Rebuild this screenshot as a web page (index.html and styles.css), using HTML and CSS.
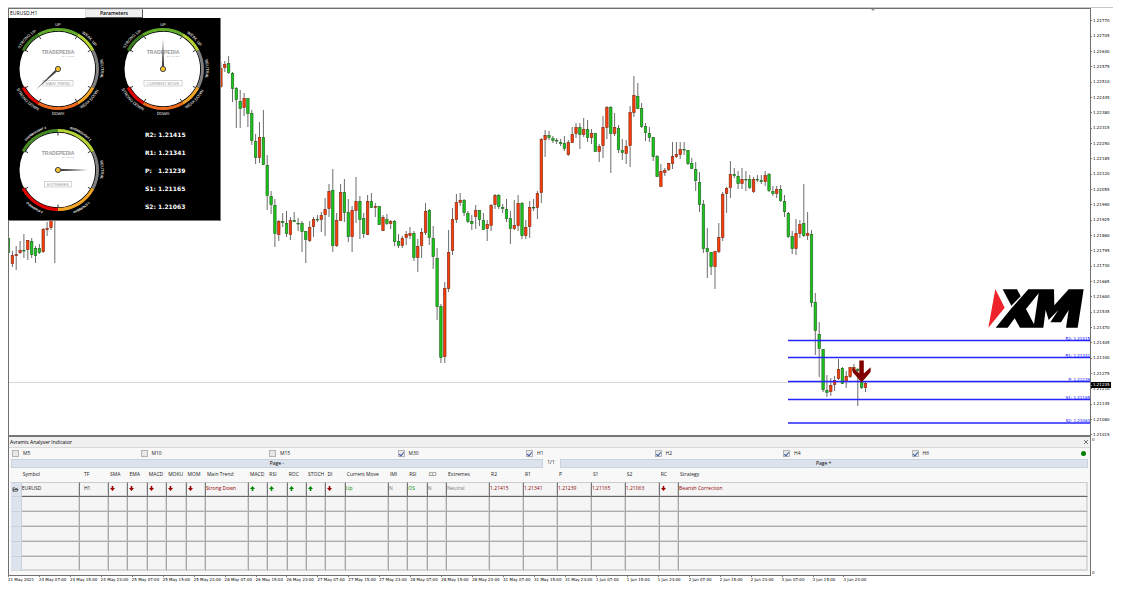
FILE: index.html
```html
<!DOCTYPE html>
<html lang="en">
<head>
<meta charset="utf-8">
<title>EURUSD,H1</title>
<link rel="stylesheet" href="styles.css">
</head>
<body>
<main class="terminal">
  <section class="chart">
    <svg class="plot" viewBox="9 9 1081 426" role="img" aria-label="EURUSD hourly candles">
      <path d="M871 9h4l-2 2z" fill="#999"/>
      <path d="M9 382.500H1090" stroke="#d8d8d8"/>
      <g id="candles"></g>
      <g class="pivots" id="pivots"></g>
      <path d="M859.300 360.500h4.500v13l6.800-6.300v4.800l-9 10.500-9-10.500v-4.800l6.700 6.300z" fill="#800000"/>
      <g transform="translate(780 270) scale(.33333)">
        <path d="M646 57L674 113 625 173z" fill="#ee2229"/>
        <path d="M668 58H711L722 79 694 107z"/>
        <path d="M647 173L695 114 745 58H822L823 106 866 58H911L893 173H858L866 120 843 157H811L835 120 806 150 797 120 790 173H720L704 145 683 173zM776 70L738 117 762 163z" fill-rule="evenodd"/>
      </g>
    </svg>
    <div class="overlay">
      <div class="overlay-head">
        <span class="pair">EURUSD,H1</span>
        <button class="params" type="button">Parameters</button>
      </div>
      <div class="dash">
        <div id="gauge-main"></div>
        <div id="gauge-move"></div>
        <div id="gauge-extremes"></div>
        <ul class="levels">
          <li>R2: 1.21415</li>
          <li>R1: 1.21341</li>
          <li>P: &nbsp; 1.21239</li>
          <li>S1: 1.21165</li>
          <li>S2: 1.21063</li>
        </ul>
      </div>
    </div>
  </section>
  <aside class="price-axis" id="prices"><span class="now">1.21235</span></aside>

  <section class="panel">
    <header class="panel-title"><h1>Avramis Analyser Indicator</h1><button class="close" type="button" aria-label="Close"><svg viewBox="0 0 6 6"><path d="M1 1l4 4M5 1L1 5"/></svg></button></header>
    <div class="panel-body">
      <div class="frames">
        <label><input type="checkbox">M5</label>
        <label><input type="checkbox">M10</label>
        <label><input type="checkbox">M15</label>
        <label><input type="checkbox" checked>M30</label>
        <label><input type="checkbox" checked>H1</label>
        <label><input type="checkbox" checked>H2</label>
        <label><input type="checkbox" checked>H4</label>
        <label><input type="checkbox" checked>H6</label>
        <i class="status"></i>
      </div>
      <div class="pager">
        <button type="button">Page -</button>
        <span>1/1</span>
        <button type="button">Page +</button>
      </div>
      <table class="signals">
        <colgroup>
          <col class="c-head"><col class="c-symbol"><col class="c-tf">
          <col class="c-s"><col class="c-s"><col class="c-s"><col class="c-s"><col class="c-s">
          <col class="c-trend">
          <col class="c-s"><col class="c-s"><col class="c-s"><col class="c-s"><col class="c-s">
          <col class="c-trend">
          <col class="c-s"><col class="c-s"><col class="c-s">
          <col class="c-trend">
          <col class="c-price"><col class="c-price"><col class="c-price"><col class="c-price"><col class="c-price">
          <col class="c-s"><col>
        </colgroup>
        <thead>
          <tr><td></td><th>Symbol</th><th class="tf">TF</th><th>SMA</th><th>EMA</th><th>MACD</th><th>MOKU</th><th>MOM</th><th>Main Trend</th><th>MACD</th><th>RSI</th><th>ROC</th><th>STOCH</th><th>DI</th><th>Current Move</th><th>IMI</th><th>RSI</th><th>CCI</th><th>Extremes</th><th>R2</th><th>R1</th><th>P</th><th>S1</th><th>S2</th><th>RC</th><th>Strategy</th></tr>
        </thead>
        <tbody id="rows">
          <tr class="filled">
            <td class="handle"><svg viewBox="0 0 8 6"><path d="M1 5V1h2l1 1h2v1M1 5l1-2h5L6 5z"/></svg></td>
            <td>EURUSD</td><td class="tf">H1</td>
            <td class="down"></td><td class="down"></td><td class="down"></td><td class="down"></td><td class="down"></td>
            <td class="bear">Strong Down</td>
            <td class="up"></td><td class="up"></td><td class="up"></td><td class="up"></td><td class="down"></td>
            <td class="bull">Up</td>
            <td class="flat">N</td><td class="bull">OS</td><td class="flat">N</td><td class="flat">Neutral</td>
            <td class="bear">1.21415</td><td class="bear">1.21341</td><td class="bear">1.21239</td><td class="bear">1.21165</td><td class="bear">1.21063</td>
            <td class="down"></td><td class="bear">Bearish Correction</td>
          </tr>
        </tbody>
      </table>
    </div>
  </section>
  <aside class="sub-axis"><span>0</span><span>0</span></aside>
  <footer class="time-axis" id="times"></footer>
</main>
<script src="chart.js"></script>
</body>
</html>
```
FILE: styles.css
```css
* { box-sizing: border-box; }
body {
  margin: 0;
  padding: 7px 8px;
  background: #fff;
  color: #222;
  font: 5px/7px "Open Sans", sans-serif;
}
button { font: inherit; color: inherit; padding: 0; border: 0; background: none; }
.terminal {
  display: grid;
  grid-template-columns: 1fr 22px;
  border-top: 1px solid #c8c8c8;
}

.chart {
  position: relative;
  border: 1px solid #707070;
  border-bottom: 2px solid #777;
}
.plot { display: block; width: 100%; }
.pivots line { stroke: #2424ff; stroke-width: 1.4; }
.pivots text {
  fill: #00f;
  font: 4px "DejaVu Sans", sans-serif;
  text-anchor: end;
}
.wick { stroke: #6c6c6c; stroke-width: 1; }
.candle-up { fill: #ff3c08; stroke: #843018; stroke-width: .7; }
.candle-down { fill: #18c818; stroke: #246c24; stroke-width: .7; }

.overlay { position: absolute; top: 0; left: -1px; }
.overlay-head { display: flex; height: 9px; align-items: center; }
.pair { width: 77px; padding-left: 2px; color: #000; }
.params {
  width: 58px;
  height: 9px;
  background: #f0f0f0;
  border: 1px solid #ddd;
  border-right-color: #555;
  border-bottom-color: #555;
  color: #000;
  font-weight: 600;
}
.dash {
  display: grid;
  grid-template-columns: 100px 100px;
  grid-auto-rows: 100px;
  gap: 1px 5px;
  padding: 1px 7px 0 0;
  background: #000;
  border-right: 1px solid #777;
  border-bottom: 1px solid #777;
}
.dash svg { display: block; width: 100%; height: 100%; }
.dial-label { fill: #fff; font: 4px "Liberation Sans", sans-serif; text-anchor: middle; }
.dial-label.long { font: bold 3px "Liberation Sans", sans-serif; }
.dial-brand { fill: #999; font: bold 5px "Liberation Sans", sans-serif; text-anchor: middle; }
.dial-by { fill: #999; font: 2px "Liberation Sans", sans-serif; text-anchor: end; }
.dial-name { fill: #999; font: 4px "Liberation Sans", sans-serif; text-anchor: middle; }
.levels {
  margin: 0;
  padding: 6px 0 0 32px;
  list-style: none;
  color: #fff;
  font: bold 6px/18px "DejaVu Sans", sans-serif;
  white-space: nowrap;
}

.price-axis {
  position: relative;
  display: flex;
  flex-direction: column;
  justify-content: space-between;
  margin-bottom: -1px;
  padding: 10px 0 0;
  color: #000;
  font: 4px/6px "DejaVu Sans", sans-serif;
}
.price-axis span::before {
  content: "";
  display: inline-block;
  width: 1px;
  height: 1px;
  margin-right: 1px;
  vertical-align: middle;
  background: #777;
}
.price-axis .now {
  position: absolute;
  top: 87%;
  left: 0;
  right: 2px;
  background: #000;
  color: #fff;
}

.panel {
  border: 1px solid #707070;
  border-top: 0;
  background: #f8f8f8;
}
.panel-title {
  display: flex;
  justify-content: space-between;
  align-items: center;
  height: 11px;
  padding: 0 1px;
  background: #f0f0f0;
  border-bottom: 1px solid #d8d8d8;
}
.panel-title h1 { margin: 0; font-size: 5px; font-weight: 400; color: #000; }
.close { width: 6px; height: 6px; }
.close svg { display: block; fill: none; stroke: #777; }
.panel-body { padding: 0 2px 4px; }

.frames {
  display: grid;
  grid-template-columns: repeat(8, 1fr) 48px;
  align-items: center;
  height: 11px;
  padding-left: 1px;
}
.frames label { display: flex; align-items: center; gap: 4px; }
.frames input {
  appearance: none;
  display: grid;
  place-content: center;
  width: 7px;
  height: 7px;
  margin: 0;
  border: 1px solid #b4b4b4;
  background: #e8e8e8;
}
.frames input:checked::after {
  content: "";
  width: 2px;
  height: 4px;
  border: solid #3c5ca8;
  border-width: 0 1px 1px 0;
  transform: rotate(40deg);
}
.status {
  justify-self: end;
  width: 5px;
  height: 5px;
  margin-right: 2px;
  border-radius: 50%;
  background: #008000;
}
.pager {
  display: grid;
  grid-template-columns: minmax(0, 531fr) 17px minmax(0, 528fr);
  height: 9px;
  text-align: center;
}
.pager span { line-height: 6px; }
.pager button { background: #dce3ec; border: 1px solid #c6d2de; line-height: 7px; color: #000; }

.signals {
  width: 100%;
  table-layout: fixed;
  border-spacing: 0;
}
.c-head { width: 1%; }
.c-symbol { width: 5.4%; }
.c-tf { width: 2.7%; }
.c-s { width: 1.8%; }
.c-trend { width: 4%; }
.c-price { width: 3.15%; }
.signals th, .signals td { padding: 0; text-align: left; font-weight: 400; white-space: nowrap; }
.signals th { height: 14px; padding: 0 0 1px 1px; }
.signals .tf { padding-left: 4px; }
.signals tbody td {
  height: 15px;
  background: #f5f5f5;
  border-right: 1px solid #a8a8a8;
  border-bottom: 1px solid #acacac;
  box-shadow: inset -1px -1px #d8d8d8;
}
.signals tbody tr:last-child td { height: 14px; border-bottom-color: #d8d8d8; }
.signals tbody .filled td {
  height: 15px;
  padding-bottom: 2px;
  border-top: 1px solid #ccc;
  border-right-color: #777;
  border-bottom-color: #666;
}
.signals tbody td:last-child { border-right-color: #ddd; }
.signals tbody .handle {
  background: #dce3ec;
  border-right-color: #c6d2de;
  border-bottom-color: #c6d2de;
  box-shadow: none;
}
.signals tbody .filled .handle { border-color: #c6d2de; padding: 0 0 0 1px; }
.handle svg { display: block; width: 7px; height: 5px; fill: none; stroke: #444; }
.arrow { display: block; width: 5px; height: 5px; margin-left: 1px; }
.signals tbody .filled .down, .signals tbody .filled .up { padding-bottom: 3px; }
.down .arrow { fill: #900; }
.up .arrow { fill: #080; transform: rotate(180deg); }
.signals .bear { color: #8c0000; }
.signals .bull { color: #008c00; }
.signals .flat { color: #777; }

.sub-axis {
  display: flex;
  flex-direction: column;
  justify-content: space-between;
  padding-left: 1px;
  font: 4px/6px "DejaVu Sans", sans-serif;
}
.time-axis {
  display: grid;
  grid-template-columns: repeat(35, minmax(0, 1fr));
  color: #000;
  font: 4px/6px "DejaVu Sans", sans-serif;
  white-space: nowrap;
}
.time-axis span::before {
  content: "";
  display: block;
  width: 1px;
  height: 1px;
  background: #777;
}
```
FILE: chart.js
```javascript
// Each candle: high, body top, body bottom, low, direction (r = up, g = down).
const data = `233 238 253 255 g|251 255 264 267 r|246 254 256 270 r|241 250 253 254 r|234 250 251 258 g|240 240 250 260 r|238 241 255 258 g|246 248 256 263 g|244 248 253 254 g|228 229 252 253 r|222 228 230 236 r|210 215 228 230 r|200 205 206 263 g`.split("|");
const later = `62 68 87 88 r|61 64 68 72 r|56 63 73 74 g|72 73 89 102 g|87 88 100 128 g|90 101 109 128 g|93 98 108 116 r|98 98 114 127 g|110 113 141 145 g|134 141 158 164 g|122 137 158 163 r|110 137 165 165 g|155 165 196 210 g|191 196 205 214 g|199 205 234 247 g|220 221 235 241 r|213 221 223 227 g|211 223 234 237 g|217 220 235 240 r|212 220 222 222 g|218 223 223 231 g|221 223 232 252 g|231 231 240 263 g|221 227 241 242 r|217 219 227 237 r|215 219 220 222 g|212 215 220 232 r|198 209 215 236 r|184 191 209 217 r|169 190 246 252 g|213 220 246 247 r|184 192 221 221 r|179 192 213 222 g|199 212 237 242 g|206 210 237 252 r|177 201 211 223 r|196 201 220 239 g|213 218 234 238 g|195 201 235 235 r|193 201 208 208 g|203 206 208 217 r|206 206 225 225 g|215 217 231 231 r|214 219 224 225 g|220 221 224 229 r|220 221 242 246 g|234 241 246 248 g|236 238 246 248 r|231 234 238 245 r|227 233 236 239 r|231 233 258 261 g|239 246 258 272 r|228 232 246 258 r|203 211 233 235 r|209 210 238 245 g|226 238 257 269 g|248 258 307 320 g|304 306 358 363 g|282 288 357 363 r|230 252 289 292 r|208 219 251 255 r|194 202 220 223 r|193 200 203 206 r|199 200 213 216 g|211 213 222 223 g|215 221 224 230 g|205 210 217 229 r|210 210 220 226 g|213 220 230 230 g|220 224 229 241 r|204 205 226 231 r|194 195 205 209 r|194 195 207 209 g|204 207 209 213 g|199 209 219 222 g|211 218 229 244 g|200 225 229 230 r|195 203 226 231 r|202 203 236 239 g|220 227 236 239 r|201 207 227 238 r|199 207 208 211 g|191 193 208 219 r|138 139 193 203 r|130 135 140 157 r|131 135 138 140 g|136 138 141 143 g|138 140 141 144 g|139 142 144 146 g|136 143 149 151 g|140 142 155 156 r|127 134 143 143 r|123 127 134 138 r|123 127 135 149 g|118 129 135 137 r|120 129 138 142 g|129 133 138 144 r|133 133 152 152 g|144 146 152 162 r|116 127 146 158 r|106 107 128 139 r|106 107 134 173 g|113 127 134 136 r|125 128 150 153 g|139 150 153 160 g|140 146 154 164 r|106 112 146 167 r|76 95 113 117 r|83 96 109 109 g|103 108 127 128 g|123 126 133 141 g|127 133 138 142 g|137 137 157 161 g|155 156 177 177 g|164 171 187 187 r|168 170 173 176 r|163 163 170 171 r|142 156 164 169 r|142 154 157 158 r|142 149 155 159 r|142 149 150 155 g|150 150 164 165 g|158 163 169 169 g|162 169 181 191 g|172 182 205 212 g|200 204 249 253 g|228 248 252 278 g|252 252 267 275 g|251 251 267 289 r|223 237 252 253 r|192 194 238 241 r|187 188 194 213 r|161 174 188 198 r|168 174 176 178 g|171 176 184 189 g|168 179 184 189 r|171 179 180 191 g|175 179 188 189 g|177 179 192 193 r|175 179 180 182 g|175 180 182 184 g|171 175 182 186 r|173 174 191 192 g|186 191 194 196 g|186 189 194 198 r|185 189 201 202 g|195 201 212 217 g|212 213 237 238 g|231 236 249 254 g|219 233 249 255 r|220 224 234 238 r|184 223 236 237 g|212 233 236 240 r|230 234 303 307 g|293 302 331 355 g|322 334 349 377 g|349 349 390 392 g|375 390 393 397 g|378 385 392 396 r|376 380 385 391 r|359 369 379 380 r|367 368 384 384 g|371 376 382 388 r|367 367 377 378 r|364 367 371 373 r|368 369 371 406 g|380 381 388 389 g|382 383 388 392 r`.split("|");

const STEP = 3.86;
const draw = (list, start) => list.map((row, i) => {
  const [hi, top, bottom, lo, dir] = row.split(" ");
  const x = start + i * STEP;
  const h = Math.max(0.5, bottom - top - 1);
  return `<path class="wick" d="M${x.toFixed(1)} ${hi}V${lo}"/>` +
    `<rect class="candle-${dir === "r" ? "up" : "down"}" x="${(x - 1.2).toFixed(1)}" y="${+top + 0.5}" width="2.4" height="${h}"/>`;
}).join("");
document.getElementById("candles").innerHTML = draw(data, 8.5) + draw(later, 220.9);

document.getElementById("pivots").innerHTML = [
  ["R2: 1.21415", 340.5], ["R1: 1.21341", 357.5], ["P: 1.21239", 381.5], ["S1: 1.21165", 399.5], ["S2: 1.21063", 423]
].map(([name, y]) => `<line x1="788" x2="1090" y1="${y}" y2="${y}"/><text x="1090" y="${y - 1}">${name}</text>`).join("");

let prices = "";
for (let p = 122770; p >= 121015; p -= 65) prices += `<span>${(p / 100000).toFixed(5)}</span>`;
document.getElementById("prices").insertAdjacentHTML("afterbegin", prices);

const days = ["24 May", "25 May", "26 May", "27 May", "28 May", "31 May", "1 Jun", "2 Jun", "3 Jun"];
document.getElementById("times").innerHTML = ["21 May 2021"]
  .concat(days.flatMap(d => ["07:00", "15:00", "23:00"].map(t => `${d} ${t}`)))
  .map(t => `<span>${t}</span>`).join("");

const arrow = '<svg class="arrow" viewBox="0 0 5 5"><path d="M1.700 0h1.600v2h1.700L2.500 5 0 2h1.700z"/></svg>';
document.querySelectorAll("td.up, td.down").forEach(td => { td.innerHTML = arrow; });
document.getElementById("rows").insertAdjacentHTML("beforeend",
  `<tr><td class="handle"></td>${"<td></td>".repeat(25)}</tr>`.repeat(5));

// Angles run clockwise from twelve o'clock.
const point = (a, r) => {
  const t = a * Math.PI / 180;
  return `${(r * Math.sin(t)).toFixed(2)} ${(-r * Math.cos(t)).toFixed(2)}`;
};
const arc = (a, b, r, color, width) =>
  `<path d="M${point(a, r)}A${r} ${r} 0 ${b - a > 180 ? 1 : 0} 1 ${point(b, r)}" fill="none" stroke="${color}" stroke-width="${width}"/>`;

function gauge(id, name, boxWidth, angle, bands, upper, lower, ticks) {
  const label = (path, t, offset) =>
    `<text class="dial-label${t.startsWith("OVER") ? " long" : ""}"><textPath href="#${id}-${path}" startOffset="${offset}%">${t}</textPath></text>`;
  let s = `<svg viewBox="-50 -50 100 100"><defs>
    <path id="${id}-cw" d="M-43 0A43 43 0 0 1 43 0A43 43 0 0 1 -43 0"/>
    <path id="${id}-ccw" d="M-46 0A46 46 0 0 0 46 0A46 46 0 0 0 -46 0"/></defs>
    <circle r="38.500" fill="#fff"/>`;
  s += arc(-62, 242, 37.8, "#000", 1.4);
  bands.forEach(([a, b, c]) => { s += arc(a, b, 39.5, c, 3); });
  ticks.forEach(a => { s += `<path d="M${point(a, 34.5)}L${point(a, 37.5)}" stroke="#333"/>`; });
  upper.forEach(([t, a]) => { s += label("cw", t, 25 + a / 3.6); });
  lower.forEach(([t, a]) => { s += label("ccw", t, 25 + (180 - a) / 3.6); });
  s += `<text class="dial-brand" y="-15">TRADEPEDIA</text><text class="dial-by" x="16" y="-12">BY AVRAMIS</text>
    <rect x="${-boxWidth / 2}" y="11.500" width="${boxWidth}" height="5.500" fill="#fff" stroke="#c4c4c4" stroke-width=".7"/>
    <text class="dial-name" y="15.700">${name}</text>
    <path d="M-1.200 0L0 -30L1.200 0z" fill="#444" transform="rotate(${angle})"/>
    <circle r="2.600" fill="#f4c430" stroke="#444" stroke-width="1"/></svg>`;
  document.getElementById(id).innerHTML = s;
}
const trend = [[-62, -30, "#3c7a22"], [-30, 30, "#62ac2c"], [30, 62, "#b2d235"], [62, 118, "#808080"],
  [118, 150, "#f2a426"], [150, 210, "#ee6a1c"], [210, 242, "#e00000"]];
const up = [["STRONG UP", -46], ["UP", 0], ["WEAK UP", 46], ["NEUTRAL", 90]];
const down = [["STRONG DOWN", 225], ["DOWN", 180], ["WEAK DOWN", 134]];
const trendTicks = [-60, -30, 30, 60, 120, 150, 210, 240];
gauge("gauge-main", "MAIN TREND", 30, 227, trend, up, down, trendTicks);
gauge("gauge-move", "CURRENT MOVE", 38, 0, trend, up, down, trendTicks);
gauge("gauge-extremes", "EXTREMES", 27, 90,
  [[-62, 0, "#468a26"], [0, 62, "#b2d235"], [62, 118, "#808080"], [118, 180, "#f2a426"], [180, 242, "#e00000"]],
  [["OVERBOUGHT 2", -32], ["OVERBOUGHT 1", 32], ["NEUTRAL", 90]],
  [["OVERSOLD 1", 148], ["OVERSOLD 2", 212]], [-60, 0, 60, 120, 180, 240]);
```
